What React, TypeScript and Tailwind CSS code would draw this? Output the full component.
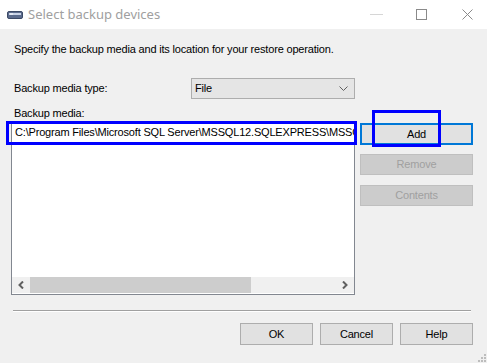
import { ReactNode } from 'react';

const font = "font-['Liberation_Sans',Arial,sans-serif]";

function Btn({ children, disabled, focus, className = '' }: { children: ReactNode; disabled?: boolean; focus?: boolean; className?: string }) {
  const look = disabled
    ? 'border border-[#bfbfbf] bg-[#cccccc] text-[#a0a0a0]'
    : focus
      ? 'border-2 border-[#0078d7] bg-[#e1e1e1] text-black'
      : 'border border-[#adadad] bg-[#e1e1e1] text-black';
  return <div className={`flex items-center justify-center text-[11px] ${look} ${className}`}>{children}</div>;
}

export default function App() {
  return <div className={`relative h-[363px] w-[487px] overflow-hidden bg-[#f0f0f0] ${font}`}>
    {/* title bar */}
    <div className="flex h-[29px] items-center bg-white">
      <svg width="16" height="8" viewBox="0 0 16 8" className="ml-[7px]">
        <rect x="0.5" y="0.5" width="15" height="7" rx="1.5" fill="#5b6b8c" stroke="#3c4a66" />
        <rect x="2" y="2" width="12" height="2" fill="#c9d3e6" />
        <rect x="3" y="2.5" width="3" height="1" fill="#ffffff" />
      </svg>
      <span className="ml-[5px] font-['Segoe_UI','Noto_Sans',sans-serif] text-[13px] text-[#a0a0a0]">Select backup devices</span>
      <div className="ml-auto flex h-full items-center">
        <div className="mr-[33px] h-px w-[13px] bg-[#d6d6d6]" />
        <div className="mr-[35px] h-[11px] w-[11px] border border-[#8a8a8a]" />
        <svg width="11" height="11" viewBox="0 0 11 11" className="mr-[14px]">
          <path d="M0.5 0.5L10.5 10.5M10.5 0.5L0.5 10.5" stroke="#8a8a8a" strokeWidth="1" />
        </svg>
      </div>
    </div>

    <div className="px-[11px] pt-[14px] text-[11px] tracking-[-0.18px] text-black">
      <div className="pl-[3px] leading-[13px]">Specify the backup media and its location for your restore operation.</div>

      <div className="mt-[22px] flex h-[21px] items-center">
        <span className="w-[180px] pl-[3px]">Backup media type:</span>
        <div className="flex h-[21px] w-[164px] items-center justify-between border border-[#adadad] bg-[#e5e5e5] pl-[3px] pr-[6px]">
          <span>File</span>
          <svg width="9" height="5" viewBox="0 0 9 5"><path d="M0.5 0.5L4.5 4.5L8.5 0.5" fill="none" stroke="#606060" /></svg>
        </div>
      </div>

      <div className="mt-[8px] pl-[3px] leading-[13px]">Backup media:</div>

      <div className="mt-[1px] flex items-start">
        <div className="relative flex h-[174px] w-[344px] flex-col border border-[#828790] bg-white">
          <div className="flex h-[21px] items-center overflow-hidden whitespace-nowrap pl-[3px]">C:\Program Files\Microsoft SQL Server\MSSQL12.SQLEXPRESS\MSSQL\Backup</div>
          <div className="flex-1" />
          <div className="mb-[1px] flex h-[16px] items-stretch bg-[#f0f0f0]">
            <div className="flex w-[18px] items-center justify-center">
              <svg width="6" height="8" viewBox="0 0 6 8"><path d="M5 0.5L1.5 4L5 7.5" fill="none" stroke="#606060" strokeWidth="2" /></svg>
            </div>
            <div className="w-[221px] bg-[#cdcdcd]" />
            <div className="flex-1" />
            <div className="flex w-[18px] items-center justify-center">
              <svg width="6" height="8" viewBox="0 0 6 8"><path d="M1 0.5L4.5 4L1 7.5" fill="none" stroke="#606060" strokeWidth="2" /></svg>
            </div>
          </div>
          {/* annotation on first row */}
          <div className="absolute left-[-6px] top-[-1px] h-[24px] w-[351px] border-[3px] border-[#0000ff]" />
        </div>

        <div className="ml-[5px] mt-[2px] flex w-[113px] flex-col">
          <div className="relative">
            <Btn focus className="h-[22px]">Add</Btn>
            <div className="absolute left-[12px] top-[-13px] h-[37px] w-[69px] border-[3px] border-[#0000ff]" />
          </div>
          <Btn disabled className="mt-[9px] h-[21px]">Remove</Btn>
          <Btn disabled className="mt-[10px] h-[21px]">Contents</Btn>
        </div>
      </div>

      <div className="ml-[2px] mr-[5px] mt-[15px] h-[2px] border-t border-[#a0a0a0] border-b border-b-white" />

      <div className="mt-[11px] flex justify-end gap-[7px] pr-[3px]">
        <Btn className="h-[22px] w-[73px]">OK</Btn>
        <Btn className="h-[22px] w-[73px]">Cancel</Btn>
        <Btn className="h-[22px] w-[73px]">Help</Btn>
      </div>
    </div>

    {/* size grip */}
    <svg width="8" height="8" viewBox="0 0 8 8" className="absolute bottom-[1px] right-[1px]">
      <rect x="6" y="0" width="2" height="2" fill="#bdbdbd" />
      <rect x="3" y="3" width="2" height="2" fill="#bdbdbd" />
      <rect x="6" y="3" width="2" height="2" fill="#bdbdbd" />
      <rect x="0" y="6" width="2" height="2" fill="#bdbdbd" />
      <rect x="3" y="6" width="2" height="2" fill="#bdbdbd" />
      <rect x="6" y="6" width="2" height="2" fill="#bdbdbd" />
    </svg>
  </div>;
}
